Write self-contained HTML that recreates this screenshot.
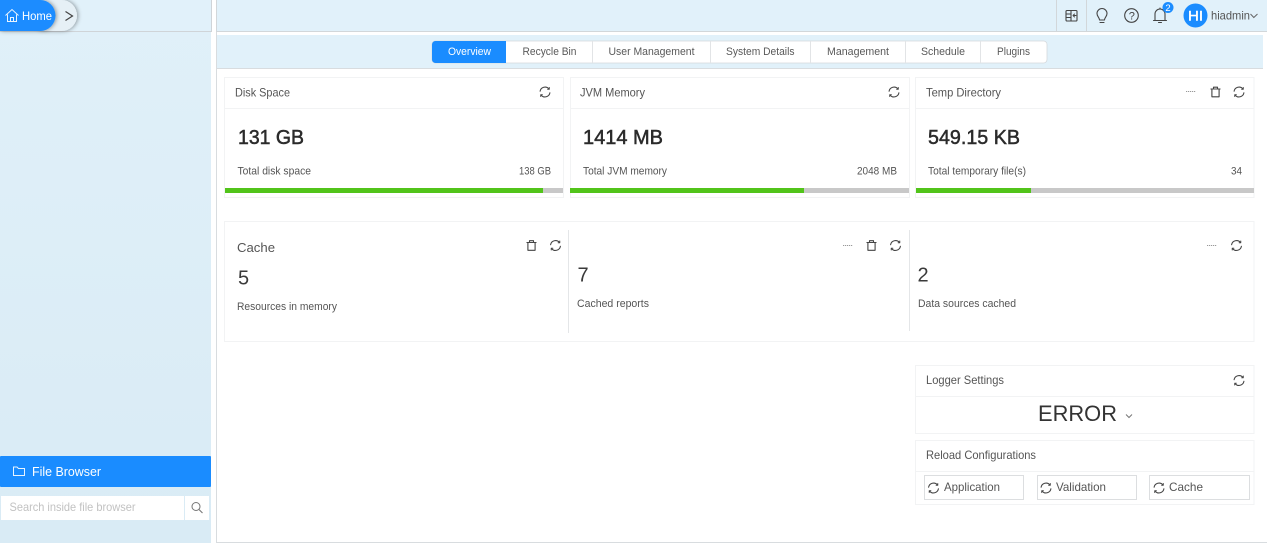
<!DOCTYPE html>
<html lang="en"><head><meta charset="utf-8"><title>Admin Overview</title>
<style>
html,body{margin:0;padding:0;width:1267px;height:543px;overflow:hidden;background:#fff}
svg{display:block}
text{font-family:"Liberation Sans",sans-serif;fill:#444}
.t{font-size:12px;fill:#555}
.s{font-size:11px;fill:#555}
.b{font-size:20px;fill:#2b2b2b;stroke:#2b2b2b;stroke-width:.5}
.n{font-size:20px;fill:#3a3a3a}
.tab{font-size:11px;fill:#595959}
.i{fill:none;stroke:#444;stroke-width:1.1;stroke-linecap:round;stroke-linejoin:round}
</style></head>
<body>
<svg width="1267" height="543" viewBox="0 0 1267 543" xmlns="http://www.w3.org/2000/svg">
<defs>
<linearGradient id="side" x1="0" y1="0" x2="0" y2="1"><stop offset="0" stop-color="#e0f0f9"/><stop offset="1" stop-color="#d9ebf5"/></linearGradient>
<filter id="sh" x="-30%" y="-30%" width="160%" height="160%"><feDropShadow dx="1" dy="0" stdDeviation="2" flood-color="#000" flood-opacity=".4"/></filter>
<g id="r" class="i"><path d="M-4.900 -.8A5 5 0 0 1 3.900 -3.100"/><path d="M4.900 .8A5 5 0 0 1 -3.900 3.100"/><path d="M4.300 -4.500V-2.700H2.600" stroke-width=".9"/><path d="M-4.300 4.500V2.700H-2.600" stroke-width=".9"/></g>
<g id="d" class="i"><path d="M-4.600 -3H4.600"/><path d="M-2 -3V-4.800H2V-3"/><path d="M-3.600 -3V4.800H3.600V-3"/></g>
<path id="dots" d="M0 0H10" stroke="#999" stroke-width="1" stroke-dasharray="1.200 .8" fill="none"/>
</defs>

<!-- sidebar -->
<rect x="0" y="0" width="211" height="543" fill="url(#side)"/>
<rect x="0" y="0" width="211" height="31" fill="#e1f1fa"/>
<rect x="0" y="31" width="212" height="1" fill="#cfd4d8"/>
<rect x="211" y="0" width="1" height="32" fill="#cfd4d8"/>
<rect x="212" y="0" width="4" height="543" fill="#fff"/>
<rect x="30" y="0" width="47" height="31" rx="15.500" fill="#e6f0f6" filter="url(#sh)"/>
<path d="M0 0H40A15.500 15.500 0 0 1 40 31H0Z" fill="#1a8cff" filter="url(#sh)"/>
<path d="M65.500 11.500L72.500 16L65.500 20.500" fill="none" stroke="#444" stroke-width="1.200"/>
<g fill="none" stroke="#e8f4ff" stroke-width="1"><path d="M5.500 15.500L12 9.500L18.500 15.500"/><path d="M7.500 14.500V21.500H16.500V14.500"/><path d="M10.500 21.500V17.500H13.500V21.500"/></g>
<text x="22" y="20" font-size="12" style="fill:#fff" textLength="30" lengthAdjust="spacingAndGlyphs">Home</text>

<rect x="0" y="456" width="211" height="31" rx="1" fill="#1a8cff"/>
<path d="M13.500 467V475.500H24.500V468.500H18.500L17 467Z" fill="none" stroke="#e8f4ff" stroke-width="1"/>
<text x="32" y="476" font-size="13" style="fill:#fff" textLength="69" lengthAdjust="spacingAndGlyphs">File Browser</text>
<rect x="1" y="496" width="183" height="24" fill="#fff"/>
<rect x="185" y="496" width="24" height="24" fill="#fff"/>
<text x="9.500" y="511" font-size="12" style="fill:#c2c2c2" textLength="126" lengthAdjust="spacingAndGlyphs">Search inside file browser</text>
<circle cx="196" cy="506.500" r="4" fill="none" stroke="#777" stroke-width="1"/><path d="M199 509.500L202.500 513" stroke="#777" stroke-width="1.100"/>

<!-- top bar -->
<rect x="216" y="0" width="1051" height="31" fill="#e1f1fa"/>
<rect x="216" y="31" width="1051" height="1" fill="#d2d7da"/>
<rect x="216" y="0" width="1" height="32" fill="#d2d7da"/>
<rect x="1056" y="0" width="1" height="31" fill="#d2d7da"/>
<rect x="1086" y="0" width="1" height="31" fill="#d2d7da"/>
<g class="i"><rect x="1066" y="10.500" width="11" height="10.500" rx="1"/><path d="M1071 10.500V21"/><path d="M1066 14H1071M1066 17.500H1071" stroke-width=".9"/><path d="M1076 15.500H1073M1074.500 14L1073 15.500L1074.500 17" stroke-width=".9"/></g>
<g class="i"><path d="M1099.500 20C1099.500 17.500 1097 16.500 1097 13.500A5 5 0 0 1 1107 13.500C1107 16.500 1104.500 17.500 1104.500 20Z"/><path d="M1100 22.500H1104"/></g>
<circle cx="1131.500" cy="15.500" r="6.800" class="i"/>
<text x="1128.700" y="19.500" font-size="11" style="fill:#444">?</text>
<g class="i"><path d="M1155 20V14A5 5 0 0 1 1165 14V20"/><path d="M1153.500 20.500H1166.500"/><path d="M1158.500 22.500H1161.500"/><path d="M1160 8V9"/></g>
<circle cx="1168" cy="7.500" r="5.500" fill="#1a8cff"/>
<text x="1165.400" y="11" font-size="9.500" style="fill:#fff">2</text>
<circle cx="1195.500" cy="15.500" r="12" fill="#1a8cff"/>
<text x="1188" y="20.500" font-size="14" style="fill:#fff;stroke:#fff;stroke-width:.4" textLength="15" lengthAdjust="spacingAndGlyphs">HI</text>
<text x="1211" y="19.500" font-size="12" style="fill:#555" textLength="39" lengthAdjust="spacingAndGlyphs">hiadmin</text>
<path d="M1250.500 14L1253.800 17.500L1257.500 14" fill="none" stroke="#666" stroke-width="1"/>

<!-- tab bar -->
<rect x="217" y="35" width="1046" height="33" fill="#e1f1fa"/>
<rect x="217" y="68" width="1046" height="1" fill="#d8dcdf"/>
<rect x="216" y="32" width="1" height="511" fill="#d8dcdf"/>
<rect x="216" y="542" width="1051" height="1" fill="#d8dcdf"/>
<rect x="432" y="41" width="615" height="22" rx="3.500" fill="#fff" stroke="#d5d9dc" stroke-width=".8"/>
<path d="M435.500 41H506V63H435.500A3.500 3.500 0 0 1 432 59.500V44.500A3.500 3.500 0 0 1 435.500 41Z" fill="#1a8cff"/>
<g fill="#e2e4e6"><rect x="592" y="41" width="1" height="22"/><rect x="710" y="41" width="1" height="22"/><rect x="810" y="41" width="1" height="22"/><rect x="905" y="41" width="1" height="22"/><rect x="980" y="41" width="1" height="22"/></g>
<text class="tab" x="448" y="55" style="fill:#fff" textLength="43" lengthAdjust="spacingAndGlyphs">Overview</text>
<text class="tab" x="522.500" y="55" textLength="54" lengthAdjust="spacingAndGlyphs">Recycle Bin</text>
<text class="tab" x="608.500" y="55" textLength="86" lengthAdjust="spacingAndGlyphs">User Management</text>
<text class="tab" x="726" y="55" textLength="68.500" lengthAdjust="spacingAndGlyphs">System Details</text>
<text class="tab" x="827" y="55" textLength="62" lengthAdjust="spacingAndGlyphs">Management</text>
<text class="tab" x="921" y="55" textLength="44" lengthAdjust="spacingAndGlyphs">Schedule</text>
<text class="tab" x="997" y="55" textLength="33" lengthAdjust="spacingAndGlyphs">Plugins</text>

<!-- cards -->
<g fill="#fff" stroke="#f2f3f4" stroke-width="1">
<rect x="224.500" y="77.500" width="339" height="120"/>
<rect x="570.500" y="77.500" width="339" height="120"/>
<rect x="915.500" y="77.500" width="338.500" height="120"/>
<rect x="224.500" y="221.500" width="1029.500" height="120"/>
<rect x="915.500" y="365.500" width="338.500" height="68"/>
<rect x="915.500" y="440.500" width="338.500" height="64"/>
</g>
<g fill="#f2f3f4">
<rect x="225" y="108" width="338" height="1"/><rect x="570" y="108" width="339" height="1"/><rect x="916" y="108" width="338" height="1"/>
<rect x="916" y="396" width="338" height="1"/><rect x="916" y="471" width="338" height="1"/>
</g>
<rect x="568" y="230" width="1" height="103" fill="#e4e6e8"/>
<rect x="909" y="230" width="1" height="101" fill="#e4e6e8"/>

<!-- progress -->
<rect x="225" y="188" width="338" height="5" fill="#c8c8c8"/><rect x="225" y="188" width="318" height="5" fill="#52c41a"/>
<rect x="570" y="188" width="339" height="5" fill="#c8c8c8"/><rect x="570" y="188" width="234" height="5" fill="#52c41a"/>
<rect x="916" y="188" width="338" height="5" fill="#c8c8c8"/><rect x="916" y="188" width="115" height="5" fill="#52c41a"/>

<!-- card text -->
<text class="t" x="235" y="96.500" textLength="55" lengthAdjust="spacingAndGlyphs">Disk Space</text>
<text class="b" x="238" y="144" textLength="66" lengthAdjust="spacingAndGlyphs">131 GB</text>
<text class="s" x="237.500" y="174.500" textLength="73.500" lengthAdjust="spacingAndGlyphs">Total disk space</text>
<text class="s" x="519" y="174.500" textLength="32" lengthAdjust="spacingAndGlyphs">138 GB</text>
<text class="t" x="580" y="96.500" textLength="65" lengthAdjust="spacingAndGlyphs">JVM Memory</text>
<text class="b" x="583" y="144" textLength="80" lengthAdjust="spacingAndGlyphs">1414 MB</text>
<text class="s" x="583" y="174.500" textLength="84" lengthAdjust="spacingAndGlyphs">Total JVM memory</text>
<text class="s" x="857" y="174.500" textLength="40" lengthAdjust="spacingAndGlyphs">2048 MB</text>
<text class="t" x="926" y="96.500" textLength="75" lengthAdjust="spacingAndGlyphs">Temp Directory</text>
<text class="b" x="928" y="144" textLength="92" lengthAdjust="spacingAndGlyphs">549.15 KB</text>
<text class="s" x="928" y="174.500" textLength="98" lengthAdjust="spacingAndGlyphs">Total temporary file(s)</text>
<text class="s" x="1231" y="174.500" textLength="11" lengthAdjust="spacingAndGlyphs">34</text>

<text x="237" y="252" font-size="13" style="fill:#555" textLength="38" lengthAdjust="spacingAndGlyphs">Cache</text>
<text class="n" x="238" y="284.500">5</text>
<text class="s" x="237" y="310" textLength="100" lengthAdjust="spacingAndGlyphs">Resources in memory</text>
<text class="n" x="577.500" y="281.500">7</text>
<text class="s" x="577" y="307" textLength="72" lengthAdjust="spacingAndGlyphs">Cached reports</text>
<text class="n" x="917.500" y="281.500">2</text>
<text class="s" x="918" y="307" textLength="98" lengthAdjust="spacingAndGlyphs">Data sources cached</text>

<text class="t" x="926" y="384" textLength="78" lengthAdjust="spacingAndGlyphs">Logger Settings</text>
<text x="1038" y="421" font-size="22" style="fill:#333" textLength="79" lengthAdjust="spacingAndGlyphs">ERROR</text>
<path d="M1126 414.500L1129 417.500L1132 414.500" fill="none" stroke="#777" stroke-width="1"/>
<text class="t" x="926" y="459" textLength="110" lengthAdjust="spacingAndGlyphs">Reload Configurations</text>

<!-- buttons -->
<g fill="#fff" stroke="#dcdee0" stroke-width="1">
<rect x="924.500" y="475.500" width="99" height="24"/>
<rect x="1037.500" y="475.500" width="99" height="24"/>
<rect x="1149.500" y="475.500" width="100" height="24"/>
</g>
<text class="t" x="944" y="491" textLength="56" lengthAdjust="spacingAndGlyphs">Application</text>
<text class="t" x="1056" y="491" textLength="50" lengthAdjust="spacingAndGlyphs">Validation</text>
<text class="t" x="1169" y="491" textLength="34" lengthAdjust="spacingAndGlyphs">Cache</text>

<!-- icons -->
<use href="#r" x="545" y="92"/>
<use href="#r" x="894" y="92"/>
<use href="#r" x="1239" y="92"/>
<use href="#d" x="1215.500" y="92"/>
<use href="#dots" x="1186" y="91.500"/>
<use href="#d" x="531.500" y="245.500"/>
<use href="#r" x="555.500" y="245.500"/>
<use href="#dots" x="843" y="245.500"/>
<use href="#d" x="871.500" y="245.500"/>
<use href="#r" x="895.500" y="245.500"/>
<use href="#dots" x="1207" y="245.500"/>
<use href="#r" x="1236.500" y="245.500"/>
<use href="#r" x="1239" y="380.500"/>
<use href="#r" x="933.500" y="488"/>
<use href="#r" x="1046" y="488"/>
<use href="#r" x="1159" y="488"/>
</svg>
</body></html>
